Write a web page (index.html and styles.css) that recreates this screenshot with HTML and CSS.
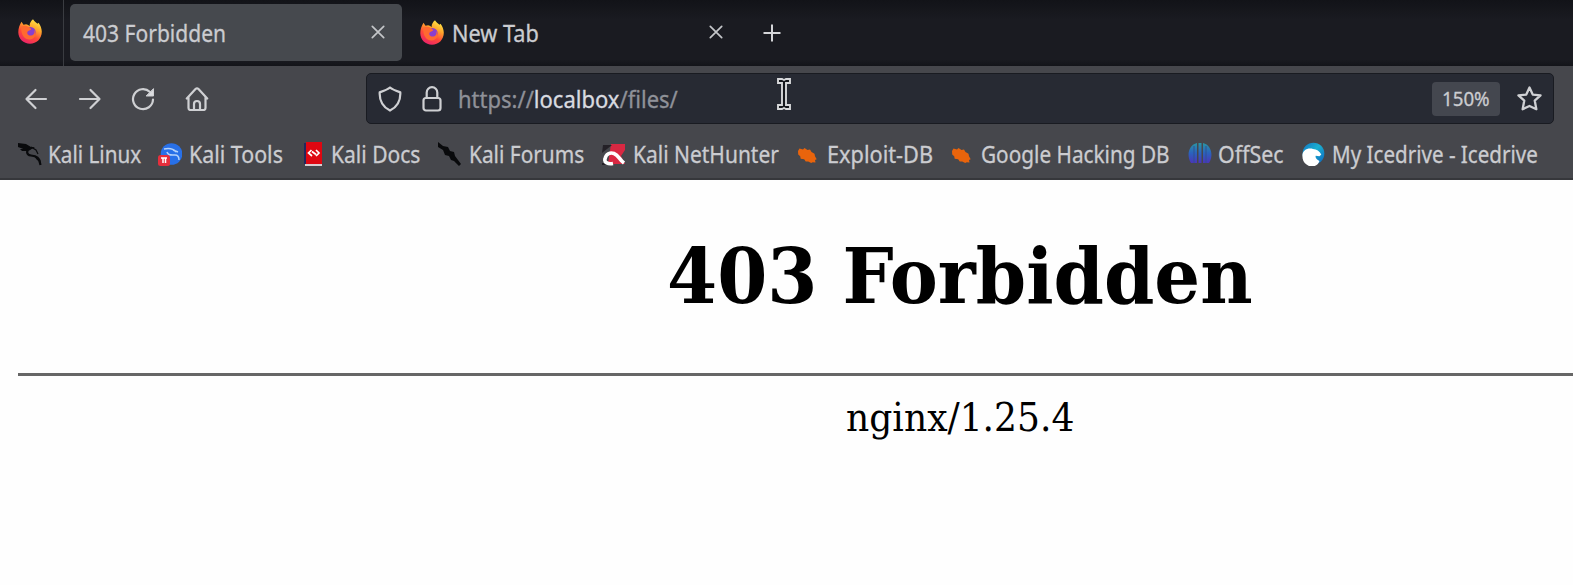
FILE: index.html
```html
<!DOCTYPE html>
<html lang="en">
<head>
<meta charset="utf-8">
<title>403 Forbidden</title>
<link rel="stylesheet" href="styles.css">
</head>
<body>
<svg class="defs" width="0" height="0" aria-hidden="true">
  <defs>
    <linearGradient id="fxOuter" x1=".8" y1="0" x2=".3" y2="1"><stop offset="0" stop-color="#fff04a"/><stop offset=".35" stop-color="#ffa52b"/><stop offset=".65" stop-color="#ff4a38"/><stop offset="1" stop-color="#e9216c"/></linearGradient>
    <linearGradient id="off" x1="0" y1="0" x2="0" y2="1"><stop offset="0" stop-color="#2a96a3"/><stop offset=".5" stop-color="#2b62bd"/><stop offset="1" stop-color="#4b35b8"/></linearGradient>
    <linearGradient id="ice" x1="0" y1="0" x2="1" y2="1"><stop offset="0" stop-color="#1173c4"/><stop offset=".45" stop-color="#1bb0cf"/><stop offset="1" stop-color="#0b62bf"/></linearGradient>
    <symbol id="firefox" viewBox="0 0 24 24.500">
      <path fill="url(#fxOuter)" d="M15 0c1 2 3 3 4.500 4.500L20.500 3.500c2 2.500 3.300 6 3.300 9C23.800 19.500 18.500 24.500 12 24.500S.3 19.500.3 13C.3 9 1.500 6 3.500 2.500L5.500 5.500 8 5c1.500.2 3 1 3.600 2C11.500 4 13 1.500 15 0z"/>
      <circle cx="12.500" cy="13" r="5.200" fill="#8a3fce"/>
      <path fill="#ff6a30" d="M3.500 7.500c3-2 6-1 8 .8 1 .9 1.500 1.200 1.700 1.700-1 1.200-3 1.200-3.700 2.500-.9 2 .8 4.200 4 3.700 2.200-.4 3.700-2.500 2.700-5.500 3 3.500 1.500 8.500-4 9.500-5 .5-9.500-4-9-13z"/>
    </symbol>
    <symbol id="close" viewBox="0 0 14 14"><path d="M1.300 1.300l11.400 11.400M12.700 1.300L1.300 12.700" fill="none" stroke="#c4c6c9" stroke-width="1.700" stroke-linecap="round"/></symbol>
    <symbol id="bug" viewBox="0 0 24 24"><path fill="#e9640c" d="M3 9l1.500-2.500 3.500 1 1.500-1.500 3 2 2.500-.5 1.500 2.500 3 1.800.5 2.500 1.700 3-1.700.7.500 2.500-2.800-.3-1.500.8-3-1.500-2.500 0-1.500-2.300-3.500-.5-.5-2.500-2-1.700z"/></symbol>
  </defs>
</svg>

<header class="browser">
  <div class="tabstrip">
    <div class="pinned"><svg class="fx"><use href="#firefox"/></svg></div>
    <div class="tab active"><span class="text">403 Forbidden</span><svg class="close"><use href="#close"/></svg></div>
    <div class="tab"><svg class="fx"><use href="#firefox"/></svg><span class="text">New Tab</span><svg class="close"><use href="#close"/></svg></div>
    <svg class="plus" viewBox="0 0 18 18"><path d="M9 .5v17M.5 9h17" stroke="#d4d5d8" stroke-width="2" fill="none"/></svg>
  </div>

  <div class="toolbar">
    <nav class="nav">
      <svg viewBox="0 0 24 24"><path d="M22 12H3M11.500 3L2.500 12l9 9"/></svg>
      <svg viewBox="0 0 24 24"><path d="M2 12H21M12.500 3l9 9-9 9"/></svg>
      <svg viewBox="0 0 24 24"><path d="M22 12.500A10 10 0 1 1 19 5"/><path class="solid" d="M22.500 2v7h-7z"/></svg>
      <svg viewBox="0 0 24 24"><path d="M1.800 11.500L10.500 2q1.500-1.400 3 0l8.700 9.500M3.500 10v11q0 2 2 2h13q2 0 2-2V10M9 23v-6q0-3 3-3t3 3v6"/></svg>
    </nav>
    <div class="urlbar">
      <svg class="shield" viewBox="0 0 24 26"><path d="M12 1.500C9 4 5.500 5 1.700 6.300 1.300 14 4 20.500 12 24.600 20 20.500 22.700 14 22.300 6.300 18.500 5 15 4 12 1.500z"/></svg>
      <svg class="lock" viewBox="0 0 20 26"><path d="M4.700 12V6.500a5.300 5.300 0 0 1 10.600 0V12"/><rect x="1.500" y="12" width="17" height="12.500" rx="2.500"/></svg>
      <span class="text url">https://<b>localbox</b>/files/</span>
      <span class="zoom"><span class="text">150%</span></span>
      <svg class="star" viewBox="0 0 24 24"><path d="M12 1.400l3.100 6.800 7.500.8-5.600 5 1.600 8.300L12 19.200l-6.600 3.100L7 14 1.400 9l7.500-.8z"/></svg>
      <svg class="cursor" viewBox="0 0 16 36"><path d="M2 2h4l2 1 2-1h4v4h-4v22h4v4h-4l-2-1-2 1H2v-4h4V6H2z" fill="#15171c" stroke="#d7d8da" stroke-width="1.900"/></svg>
    </div>
  </div>

  <nav class="bookmarks">
    <a class="bm kali"><svg viewBox="0 0 24 24"><path d="M0 1l8 1 5 3 4 0-5 3-4 0-8-3zM2 7l7 0v2H4z" fill="#090a0c"/><path d="M12 7c-4 1-4 6 1 6.500 6 .5 8 2 9.500 9.500" fill="none" stroke="#090a0c" stroke-width="2.200"/><path d="M13 5l5 3 2 4" fill="none" stroke="#090a0c" stroke-width="1.200"/><path d="M16 14l6 3 1 3-4-2z" fill="#090a0c"/></svg><span class="text">Kali Linux</span></a>
    <a class="bm tools"><svg viewBox="0 0 24 24"><circle cx="13.500" cy="12" r="10.800" fill="#2870e8"/><path d="M6 7c5-1 9-1 12 3M9 10c1 4 5 3 8 3 4 0 4 3 4 5M15 8l5 2" fill="none" stroke="#b4d2fa" stroke-width="1.500"/><rect x="0" y="13" width="12" height="11" rx="2.500" fill="#e62f3c"/><path d="M3 16h2v5M7.500 21v-5M4 16h5" fill="none" stroke="#fff" stroke-width="1.500"/></svg><span class="text">Kali Tools</span></a>
    <a class="bm docs"><svg viewBox="0 0 24 24"><path fill="#df0711" d="M5 0h16v22H5z"/><path fill="#23275d" d="M3 1h2v21H3z"/><path fill="#d8cdd1" d="M4 22h17v2H4z"/><path d="M10.500 8l-3 3 3.500 3M15 8l3 3-3 3M11 9.500l4 3" fill="none" stroke="#fff" stroke-width="1.700"/></svg><span class="text">Kali Docs</span></a>
    <a class="bm forums"><svg viewBox="0 0 24 24"><path d="M0 0l5 4 5 1 2 4 4 1 1 4 6 8-2 2-5-5-3-1-2-4-4-1-2-5-5-3z" fill="#090a0c"/></svg><span class="text">Kali Forums</span></a>
    <a class="bm nethunter"><svg viewBox="0 0 24 24"><path d="M9 2h14v6l-4 6 4 8H6z" fill="#d92842"/><path d="M1 3h9L0 11zM0 21h5v2H0z" fill="#242127"/><path d="M11 21.500c-5 1-9-1-8-4.500 1-5 5-7 9-5.500 5 2 5 6 10 9.500" fill="none" stroke="#fff" stroke-width="3.600"/></svg><span class="text">Kali NetHunter</span></a>
    <a class="bm exploit"><svg><use href="#bug"/></svg><span class="text">Exploit-DB</span></a>
    <a class="bm ghdb"><svg><use href="#bug"/></svg><span class="text">Google Hacking DB</span></a>
    <a class="bm offsec"><svg viewBox="0 0 24 24"><path fill="url(#off)" d="M3 21C-2 13 1 3 9 1v20zM10.500 1h3v20h-3zM15 1c8 2 11 12 6 20h-6z"/><path d="M6 4v17M18 4v17" stroke="#315191" stroke-width="1"/></svg><span class="text">OffSec</span></a>
    <a class="bm ice"><svg viewBox="0 0 24 26"><circle cx="12.500" cy="12.500" r="11.800" fill="url(#ice)"/><path fill="#fff" d="M.5 15C.5 9 6 6 12 7.500c4 .5 7 2 9 6l-2 2-4-.5c-1 2 1 4 4 5.500-2 6-9 8-14 4-3-2-4.500-5-4.500-9.500z"/></svg><span class="text">My Icedrive - Icedrive</span></a>
  </nav>
</header>

<main class="page">
  <h1><span>403 Forbidden</span></h1>
  <hr>
  <p><span>nginx/1.25.4</span></p>
</main>
</body>
</html>
```
FILE: styles.css
```css
* { box-sizing: border-box; }
body {
  margin: 0;
  width: 1573px;
  height: 585px;
  overflow: hidden;
  background: #fefefe;
  font-family: "Noto Sans", sans-serif;
  font-size: 23px;
  color: #cbccd0;
}
svg { flex: none; display: block; }
.defs { position: absolute; }

/* Interface labels use a narrowed sans face */
.text {
  --squeeze: .915;
  display: block;
  flex: none;
  white-space: nowrap;
  line-height: 30px;
  transform: scaleX(var(--squeeze));
  transform-origin: left center;
  -webkit-text-stroke: .3px currentColor;
}

.tabstrip {
  height: 66px;
  display: flex;
  align-items: center;
  background: linear-gradient(#121318, #1a1b21 30%, #1a1b21 90%, #131419);
}
.pinned {
  width: 64px;
  height: 66px;
  padding: 19px 0 0 18px;
  border-right: 1px solid #3a3c41;
}
.fx { width: 24px; height: 25px; }
.tab {
  display: flex;
  align-items: center;
  width: 332px;
  height: 57px;
  padding: 0 17px 0 13px;
  border-radius: 5px;
  margin-top: -2px;
  margin-left: 6px;
}
.tab.active { background: #46494e; }
.tab .text { padding-top: 2px; line-height: 32px; }
.tab:not(.active) { padding-left: 12px; }
.tab:not(.active) .text { --squeeze: .943; }
.tab .fx { margin-right: 8px; }
.tab .close { width: 14px; height: 14px; margin-left: auto; }
.plus { width: 18px; height: 18px; margin-left: 23px; }

.toolbar {
  display: flex;
  height: 63px;
  padding-top: 7px;
  background: #46474c;
}
.nav { display: flex; gap: 29.700px; width: 366px; padding: 14px 0 0 24px; }
.nav svg { width: 24px; height: 24px; }
.nav path, .shield path, .lock path, .lock rect, .star path {
  fill: none;
  stroke: #cfd0d3;
  stroke-width: 2.200;
  stroke-linejoin: round;
  stroke-linecap: round;
}
.nav .solid { fill: #dcdde0; stroke-width: 1; }
.urlbar {
  position: relative;
  display: flex;
  align-items: center;
  width: 1188px;
  height: 51px;
  padding: 0 11px;
  background: #272a33;
  border: 1px solid #191b21;
  border-radius: 5px;
}
.shield { width: 24px; height: 26px; }
.lock { width: 20px; height: 26px; margin-left: 20px; }
.url { --squeeze: .957; margin-left: 16px; color: #8f9198; }
.url b { font-weight: 400; color: #d9dbe0; }
.zoom {
  width: 68px;
  height: 34px;
  margin-left: auto;
  padding: 2px 0 0 10px;
  background: #44474f;
  border-radius: 4px;
  font-size: 19.500px;
}
.zoom .text { --squeeze: .96; }
.star { width: 25px; height: 25px; margin-left: 17px; }
.cursor { position: absolute; left: 409px; top: 3px; width: 16px; height: 36px; }

.bookmarks {
  display: flex;
  height: 51px;
  padding: 10px 0 0 18px;
  background: #46474c;
  border-bottom: 2px solid #36373b;
}
.bm { display: flex; gap: 6px; flex: none; height: 30px; }
.bm svg { width: 24px; height: 24px; margin-top: 3px; }
.bm.kali { width: 140px; }
.bm.kali .text { --squeeze: .9; }
.bm.tools { width: 143px; gap: 7px; }
.bm.tools .text { --squeeze: .93; }
.bm.docs { width: 137px; gap: 6px; }
.bm.forums { width: 164px; gap: 7px; }
.bm.forums .text { --squeeze: .907; }
.bm.nethunter { width: 193px; gap: 7px; }
.bm.nethunter .text { --squeeze: .912; }
.bm.exploit { width: 154px; gap: 8px; }
.bm.exploit .text { --squeeze: .944; }
.bm.ghdb { width: 239px; gap: 8px; }
.bm.ghdb .text { --squeeze: .903; }
.bm.offsec { width: 113px; }
.bm.offsec .text { --squeeze: .93; }
.bm.ice { width: 240px; gap: 7px; }
.bm.ice .text { --squeeze: .895; }

.page { color: #000; font-family: "DejaVu Serif", serif; }
.page span { display: inline-block; transform: scaleX(.942); }
h1, p { padding-left: 347px; text-align: center; }
h1 { margin: 51px 0 0; font-size: 76.500px; line-height: 90px; }
hr { margin: 52px 0 0 18px; border: 0; height: 3px; background: #666; }
p { margin: 19px 0 0; font-size: 38.300px; line-height: 46px; }
```
